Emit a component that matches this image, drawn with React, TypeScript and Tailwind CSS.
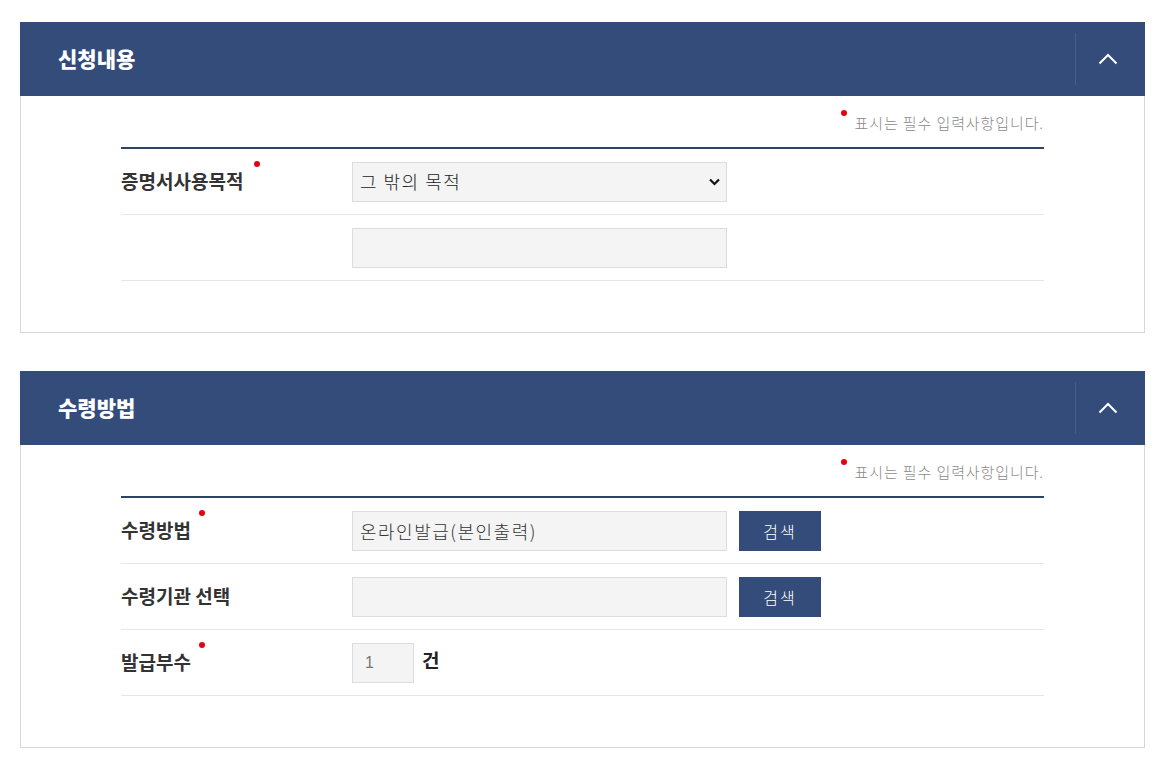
import React from "react";

const FONT = { fontFamily: '"Noto Sans CJK KR", "Noto Sans", sans-serif' };

function Dot({ right }: { right: string }) {
  return (
    <span
      className={`absolute top-[-6px] w-[6px] h-[6px] rounded-full bg-[#e60012] ${right}`}
    />
  );
}

function Header({ title }: { title: string }) {
  return (
    <div className="flex h-[74px] items-center bg-[#344c79]">
      <h2 className="flex-1 pl-[38px] text-[21px] font-extrabold tracking-[0px] text-white">{title}</h2>
      <div className="flex h-[52px] w-[70px] items-center justify-center border-l border-[#4a5f88] pr-[6px]">
        <svg width="20" height="12" viewBox="0 0 20 12" fill="none">
          <path d="M1.5 10.5 L10 2 L18.5 10.5" stroke="white" strokeWidth="2" />
        </svg>
      </div>
    </div>
  );
}

function Note() {
  return (
    <div className="flex h-[20px] justify-end">
      <span className="relative text-[15px] font-light leading-[20px] text-[#8a8a8a] tracking-[0.9px]">
        <span className="absolute left-[-14px] top-[-3px] h-[6px] w-[6px] rounded-full bg-[#e60012]" />
        표시는 필수 입력사항입니다.
      </span>
    </div>
  );
}

function Row({ label, dotRight, children }: { label?: string; dotRight?: string; children: React.ReactNode }) {
  return (
    <div className="flex h-[66px] items-center border-b border-[#e6e6e6]">
      <div className="w-[231px] text-[19px] font-bold text-[#333]">
        {label && (
          <span className="relative">
            {label}
            {dotRight && <Dot right={dotRight} />}
          </span>
        )}
      </div>
      <div className="flex items-center">{children}</div>
    </div>
  );
}

const inputCls =
  "h-[40px] w-[375px] border border-[#dcdcdc] bg-[#f4f4f4] px-[7px] text-[18px] font-light tracking-[1.5px] text-[#222] outline-none";

function SearchBtn() {
  return (
    <button className="ml-[12px] h-[40px] w-[82px] bg-[#344c79] text-[16px] font-light tracking-[2px] text-white">
      검색
    </button>
  );
}

export default function App() {
  return (
    <div className="min-h-[768px] bg-white pt-[22px]" style={FONT}>
      <div className="ml-[20px] w-[1125px]">
        <section>
          <Header title="신청내용" />
          <div className="border-x border-b border-[#d7d7d7] px-[100px] pt-[17px] pb-[50px]">
            <Note />
            <div className="mt-[14px] border-t-2 border-[#2f4268]">
              <Row label="증명서사용목적" dotRight="right-[-17px]">
                <div className="relative">
                  <select
                    className={`${inputCls} appearance-none text-[#111]`}
                    defaultValue="etc"
                  >
                    <option value="etc">그 밖의 목적</option>
                  </select>
                  <svg
                    className="pointer-events-none absolute right-[7px] top-[16px]"
                    width="11"
                    height="8"
                    viewBox="0 0 11 8"
                    fill="none"
                  >
                    <path d="M1 1.5 L5.5 6 L10 1.5" stroke="#111" strokeWidth="2.2" />
                  </svg>
                </div>
              </Row>
              <Row>
                <input className={inputCls} />
              </Row>
            </div>
            <div className="h-px" />
          </div>
        </section>

        <section className="mt-[38px]">
          <Header title="수령방법" />
          <div className="border-x border-b border-[#d7d7d7] px-[100px] pt-[17px] pb-[50px]">
            <Note />
            <div className="mt-[14px] border-t-2 border-[#2f4268]">
              <Row label="수령방법" dotRight="right-[-14px]">
                <input className={`${inputCls} text-[#333]`} readOnly value="온라인발급(본인출력)" />
                <SearchBtn />
              </Row>
              <Row label="수령기관 선택">
                <input className={inputCls} readOnly />
                <SearchBtn />
              </Row>
              <Row label="발급부수" dotRight="right-[-14px]">
                <input
                  className="h-[40px] w-[62px] border border-[#dcdcdc] bg-[#f4f4f4] px-[12px] text-[16px] text-[#777] outline-none"
                  style={{ fontFamily: '"Liberation Sans", Arial, sans-serif' }}
                  readOnly
                  value="1"
                />
                <span className="ml-[8px] -mt-[4px] text-[19px] font-bold text-[#222]">건</span>
              </Row>
            </div>
            <div className="h-px" />
          </div>
        </section>
      </div>
    </div>
  );
}
